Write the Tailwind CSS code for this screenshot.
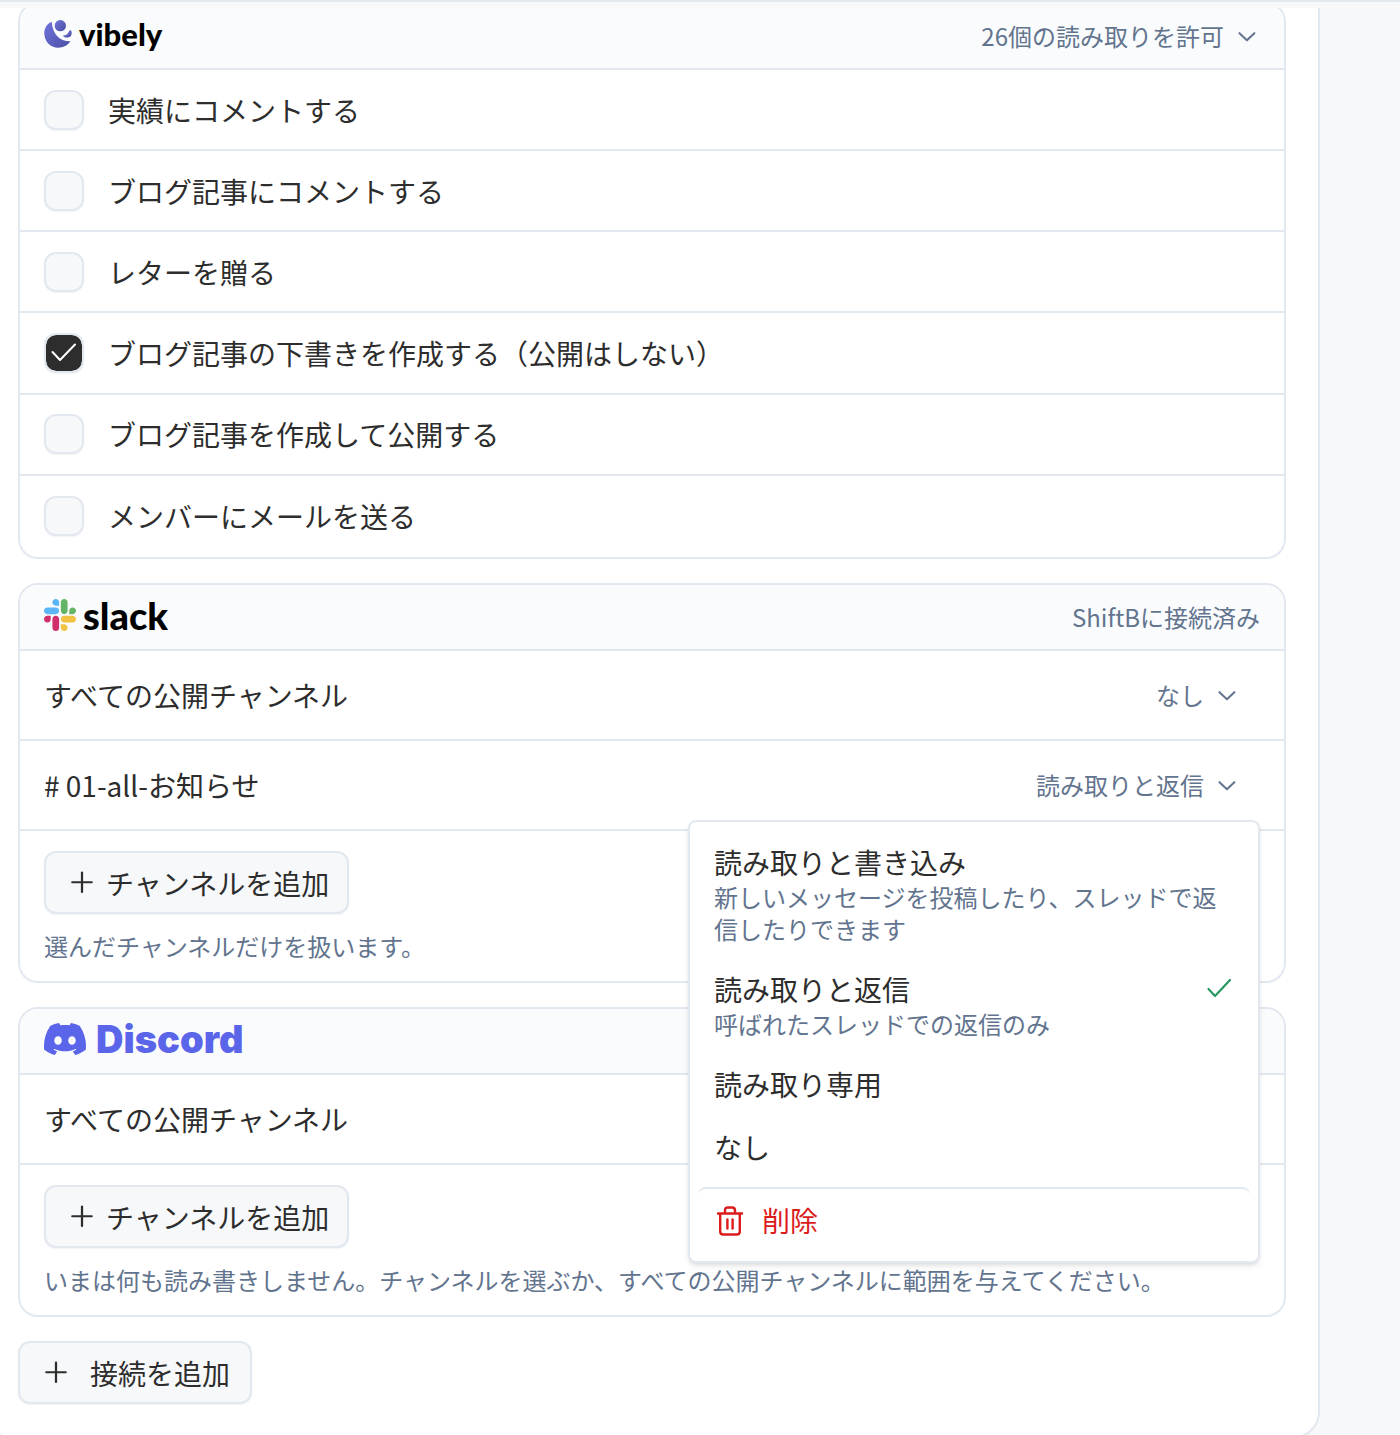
<!DOCTYPE html>
<html lang="ja">
  <head>
    <meta charset="UTF-8" />
    <meta name="viewport" content="width=device-width, initial-scale=1.0" />
    <script src="https://cdn.jsdelivr.net/npm/@tailwindcss/browser@4"></script>
    <title>接続</title>
  </head>
  <body
    class="h-screen overflow-hidden bg-[#f6f8fa] font-['Noto_Sans_CJK_JP',sans-serif] text-[28px] leading-10 text-[#2d2d2d]"
  >
    <!-- Icons -->
    <svg class="hidden">
      <symbol id="chevron" viewBox="0 0 15 15">
        <path
          d="M4 6L8 9.75L12 6"
          fill="none"
          stroke="currentColor"
          stroke-width="1.1"
          stroke-linecap="round"
          stroke-linejoin="round"
        />
      </symbol>
      <symbol id="plus" viewBox="0 0 15 15">
        <path
          d="M7.5 1.9v10.4M2.3 7.1h10.4"
          fill="none"
          stroke="currentColor"
          stroke-width="1.2"
          stroke-linecap="round"
        />
      </symbol>
    </svg>

    <!-- Top bar -->
    <header
      class="relative z-10 h-2 border-t-2 border-slate-200 bg-[#f6f8fa]"
    ></header>

    <main
      class="-mt-1.5 mr-20 -ml-4 flex flex-col items-start gap-6 rounded-b-[26px] border-2 border-t-0 border-slate-200 bg-white px-8 pb-8"
    >
      <!-- vibely -->
      <section class="w-full rounded-[20px] border-2 border-slate-200">
        <div
          class="flex h-[66px] items-center justify-between rounded-t-[18px] border-b-2 border-slate-200 bg-[#fafbfd] px-6"
        >
          <h2
            class="flex items-center gap-[7px] pb-1 font-['Lato'] text-[31px] font-black text-black"
          >
            <svg class="h-7 w-7" viewBox="0 0 84 84" fill="url(#vibely)">
              <defs>
                <linearGradient id="vibely" x1="0" y1="0" x2="1" y2="1">
                  <stop offset="0" stop-color="#6f74dc" />
                  <stop offset="1" stop-color="#4c4fa3" />
                </linearGradient>
              </defs>
              <path
                d="M23 5C6 12 0 28 1 44C4 68 22 83 42 83C58 83 71 77 79 64C62 64 49 59 40 49C30 38 25 24 23 5Z"
              />
              <path
                d="M82 33C85 43 81 50 74 52C68 54 61 52 56 47C66 47 73 42 75 34C77 30 81 30 82 33Z"
              />
              <circle cx="49" cy="17" r="17" />
            </svg>
            vibely
          </h2>
          <button
            type="button"
            class="flex items-center gap-2 text-2xl text-slate-500"
          >
            26個の読み取りを許可
            <svg class="h-7 w-7"><use href="#chevron" /></svg>
          </button>
        </div>
        <div
          class="grid min-h-[487px] auto-rows-fr divide-y-2 divide-slate-200"
        >
          <label class="flex items-center gap-6 px-6">
            <span class="grid place-items-center">
              <input
                type="checkbox"
                class="peer col-start-1 row-start-1 h-10 w-10 appearance-none rounded-xl border-2 border-slate-200 bg-[#f6f8fa] bg-clip-padding shadow-xs checked:bg-[#2d2d2d]"
              />
              <svg
                class="invisible col-start-1 row-start-1 h-7 w-7 text-white peer-checked:visible"
                viewBox="0 0 28 28"
              >
                <path
                  d="M2.5 13L10 21L25 5.5"
                  fill="none"
                  stroke="currentColor"
                  stroke-width="2"
                  stroke-linecap="round"
                  stroke-linejoin="round"
                />
              </svg>
            </span>
            実績にコメントする
          </label>
          <label class="flex items-center gap-6 px-6">
            <span class="grid place-items-center">
              <input
                type="checkbox"
                class="peer col-start-1 row-start-1 h-10 w-10 appearance-none rounded-xl border-2 border-slate-200 bg-[#f6f8fa] bg-clip-padding shadow-xs checked:bg-[#2d2d2d]"
              />
              <svg
                class="invisible col-start-1 row-start-1 h-7 w-7 text-white peer-checked:visible"
                viewBox="0 0 28 28"
              >
                <path
                  d="M2.5 13L10 21L25 5.5"
                  fill="none"
                  stroke="currentColor"
                  stroke-width="2"
                  stroke-linecap="round"
                  stroke-linejoin="round"
                />
              </svg>
            </span>
            ブログ記事にコメントする
          </label>
          <label class="flex items-center gap-6 px-6">
            <span class="grid place-items-center">
              <input
                type="checkbox"
                class="peer col-start-1 row-start-1 h-10 w-10 appearance-none rounded-xl border-2 border-slate-200 bg-[#f6f8fa] bg-clip-padding shadow-xs checked:bg-[#2d2d2d]"
              />
              <svg
                class="invisible col-start-1 row-start-1 h-7 w-7 text-white peer-checked:visible"
                viewBox="0 0 28 28"
              >
                <path
                  d="M2.5 13L10 21L25 5.5"
                  fill="none"
                  stroke="currentColor"
                  stroke-width="2"
                  stroke-linecap="round"
                  stroke-linejoin="round"
                />
              </svg>
            </span>
            レターを贈る
          </label>
          <label class="flex items-center gap-6 px-6">
            <span class="grid place-items-center">
              <input
                type="checkbox"
                checked
                class="peer col-start-1 row-start-1 h-10 w-10 appearance-none rounded-xl border-2 border-slate-200 bg-[#f6f8fa] bg-clip-padding shadow-xs checked:bg-[#2d2d2d]"
              />
              <svg
                class="invisible col-start-1 row-start-1 h-7 w-7 text-white peer-checked:visible"
                viewBox="0 0 28 28"
              >
                <path
                  d="M2.5 13L10 21L25 5.5"
                  fill="none"
                  stroke="currentColor"
                  stroke-width="2"
                  stroke-linecap="round"
                  stroke-linejoin="round"
                />
              </svg>
            </span>
            ブログ記事の下書きを作成する（公開はしない）
          </label>
          <label class="flex items-center gap-6 px-6">
            <span class="grid place-items-center">
              <input
                type="checkbox"
                class="peer col-start-1 row-start-1 h-10 w-10 appearance-none rounded-xl border-2 border-slate-200 bg-[#f6f8fa] bg-clip-padding shadow-xs checked:bg-[#2d2d2d]"
              />
              <svg
                class="invisible col-start-1 row-start-1 h-7 w-7 text-white peer-checked:visible"
                viewBox="0 0 28 28"
              >
                <path
                  d="M2.5 13L10 21L25 5.5"
                  fill="none"
                  stroke="currentColor"
                  stroke-width="2"
                  stroke-linecap="round"
                  stroke-linejoin="round"
                />
              </svg>
            </span>
            ブログ記事を作成して公開する
          </label>
          <label class="flex items-center gap-6 px-6">
            <span class="grid place-items-center">
              <input
                type="checkbox"
                class="peer col-start-1 row-start-1 h-10 w-10 appearance-none rounded-xl border-2 border-slate-200 bg-[#f6f8fa] bg-clip-padding shadow-xs checked:bg-[#2d2d2d]"
              />
              <svg
                class="invisible col-start-1 row-start-1 h-7 w-7 text-white peer-checked:visible"
                viewBox="0 0 28 28"
              >
                <path
                  d="M2.5 13L10 21L25 5.5"
                  fill="none"
                  stroke="currentColor"
                  stroke-width="2"
                  stroke-linecap="round"
                  stroke-linejoin="round"
                />
              </svg>
            </span>
            メンバーにメールを送る
          </label>
        </div>
      </section>

      <!-- Slack -->
      <section class="w-full rounded-[20px] border-2 border-slate-200">
        <div
          class="flex h-[66px] items-center justify-between rounded-t-[18px] border-b-2 border-slate-200 bg-[#fafbfd] px-6"
        >
          <h2
            class="flex items-center gap-[7px] pb-1 font-['Lato'] text-[38px] font-black text-black"
          >
            <svg class="h-8 w-8" viewBox="0 0 122.8 122.8">
              <path
                fill="#d02f6b"
                d="M25.8 77.6c0 7.1-5.8 12.9-12.9 12.9S0 84.7 0 77.6s5.8-12.9 12.9-12.9h12.9v12.9zm6.5 0c0-7.1 5.8-12.9 12.9-12.9s12.9 5.8 12.9 12.9v32.3c0 7.1-5.8 12.9-12.9 12.9s-12.9-5.8-12.9-12.9V77.6z"
              />
              <path
                fill="#5ab6f7"
                d="M45.2 25.8c-7.1 0-12.9-5.8-12.9-12.9S38.1 0 45.2 0s12.9 5.8 12.9 12.9v12.9H45.2zm0 6.5c7.1 0 12.9 5.8 12.9 12.9s-5.8 12.9-12.9 12.9H12.9C5.8 58.1 0 52.3 0 45.2s5.8-12.9 12.9-12.9h32.3z"
              />
              <path
                fill="#63b465"
                d="M97 45.2c0-7.1 5.8-12.9 12.9-12.9s12.9 5.8 12.9 12.9-5.8 12.9-12.9 12.9H97V45.2zm-6.5 0c0 7.1-5.8 12.9-12.9 12.9s-12.9-5.8-12.9-12.9V12.9C64.7 5.8 70.5 0 77.6 0s12.9 5.8 12.9 12.9v32.3z"
              />
              <path
                fill="#f2c244"
                d="M77.6 97c7.1 0 12.9 5.8 12.9 12.9s-5.8 12.9-12.9 12.9-12.9-5.8-12.9-12.9V97h12.9zm0-6.5c-7.1 0-12.9-5.8-12.9-12.9s5.8-12.9 12.9-12.9h32.3c7.1 0 12.9 5.8 12.9 12.9s-5.8 12.9-12.9 12.9H77.6z"
              />
            </svg>
            slack
          </h2>
          <span class="text-2xl text-slate-500">ShiftBに接続済み</span>
        </div>
        <ul>
          <li
            class="flex h-[90px] items-center justify-between border-b-2 border-slate-200 px-6"
          >
            すべての公開チャンネル
            <button
              type="button"
              class="flex items-center gap-2 px-5 text-2xl text-slate-500"
            >
              なし
              <svg class="h-7 w-7"><use href="#chevron" /></svg>
            </button>
          </li>
          <li
            class="relative flex h-[90px] items-center justify-between border-b-2 border-slate-200 px-6"
          >
            # 01-all-お知らせ
            <button
              type="button"
              aria-haspopup="menu"
              aria-expanded="true"
              class="flex items-center gap-2 px-5 text-2xl text-slate-500"
            >
              読み取りと返信
              <svg class="h-7 w-7"><use href="#chevron" /></svg>
            </button>

            <!-- Permission menu -->
            <div
              role="menu"
              class="absolute top-[79px] right-6 z-20 flex w-[572px] flex-col rounded-lg border-2 border-slate-200 bg-white px-2 py-[9px] shadow-md"
            >
              <button
                type="button"
                role="menuitem"
                class="px-4 py-[13px] text-left leading-[37px]"
              >
                読み取りと書き込み
                <span class="block text-2xl leading-8 text-slate-500"
                  >新しいメッセージを投稿したり、スレッドで返信したりできます</span
                >
              </button>
              <button
                type="button"
                role="menuitem"
                class="px-4 py-[13px] text-left leading-[37px]"
              >
                <span class="flex items-center justify-between">
                  読み取りと返信
                  <svg class="h-7 w-7 text-[#299764]" viewBox="0 0 28 28">
                    <path
                      d="M2.5 13L9 20L24 4"
                      fill="none"
                      stroke="currentColor"
                      stroke-width="2.2"
                      stroke-linecap="round"
                      stroke-linejoin="round"
                    />
                  </svg>
                </span>
                <span class="block text-2xl leading-8 text-slate-500"
                  >呼ばれたスレッドでの返信のみ</span
                >
              </button>
              <button
                type="button"
                role="menuitem"
                class="px-4 py-[13px] text-left leading-[37px]"
              >
                読み取り専用
              </button>
              <button
                type="button"
                role="menuitem"
                class="px-4 py-[13px] text-left leading-[37px]"
              >
                なし
              </button>
              <button
                type="button"
                role="menuitem"
                class="mt-2 flex items-center gap-4 rounded-lg border-t-2 border-slate-200 px-4 py-[13px] leading-[37px] text-[#dc1c1c]"
              >
                <svg
                  class="h-8 w-8"
                  viewBox="0 0 32 32"
                  fill="none"
                  stroke="currentColor"
                  stroke-width="2.4"
                  stroke-linecap="round"
                  stroke-linejoin="round"
                >
                  <path
                    d="M4 8.5H28M6.2 8.5V26.5Q6.2 29.5 9.2 29.5H22.8Q25.8 29.5 25.8 26.5V8.5M11 8V5.5Q11 2.5 14 2.5H18Q21 2.5 21 5.5V8"
                  />
                  <path d="M13.4 14.5V23.5M18.6 14.5V23.5" />
                </svg>
                削除
              </button>
            </div>
          </li>
        </ul>
        <div class="px-6 pt-5 pb-[19px]">
          <button
            type="button"
            class="flex h-[63px] items-center gap-2.5 rounded-xl border-2 border-slate-200 bg-[#f6f8fa] pr-[18px] pl-[22px] shadow-xs"
          >
            <svg class="h-7 w-7"><use href="#plus" /></svg>
            チャンネルを追加
          </button>
          <p class="mt-4 text-2xl leading-8 text-slate-500">
            選んだチャンネルだけを扱います。
          </p>
        </div>
      </section>

      <!-- Discord -->
      <section class="w-full rounded-[20px] border-2 border-slate-200">
        <div
          class="flex h-[66px] items-center justify-between rounded-t-[18px] border-b-2 border-slate-200 bg-[#fafbfd] px-6"
        >
          <h2
            class="flex items-center gap-[10px] pb-1 font-['Inter'] text-[38px] font-black text-[#5b65ea]"
          >
            <svg class="h-8 w-[42px]" viewBox="0 2.9 24 18.2">
              <path
                fill="currentColor"
                d="M20.317 4.3698a19.7913 19.7913 0 0 0-4.8851-1.5152.0741.0741 0 0 0-.0785.0371c-.211.3753-.4447.8648-.6083 1.2495-1.8447-.2762-3.68-.2762-5.4868 0-.1636-.3933-.4058-.8742-.6177-1.2495a.077.077 0 0 0-.0785-.037 19.7363 19.7363 0 0 0-4.8852 1.515.0699.0699 0 0 0-.0321.0277C.5334 9.0458-.319 13.5799.0992 18.0578a.0824.0824 0 0 0 .0312.0561c2.0528 1.5076 4.0413 2.4228 5.9929 3.0294a.0777.0777 0 0 0 .0842-.0276c.4616-.6304.8731-1.2952 1.226-1.9942a.076.076 0 0 0-.0416-.1057c-.6528-.2476-1.2743-.5495-1.8722-.8923a.077.077 0 0 1-.0076-.1277c.1258-.0943.2517-.1923.3718-.2914a.0743.0743 0 0 1 .0776-.0105c3.9278 1.7933 8.18 1.7933 12.0614 0a.0739.0739 0 0 1 .0785.0095c.1202.099.246.1981.3728.2924a.077.077 0 0 1-.0066.1276 12.2986 12.2986 0 0 1-1.873.8914.0766.0766 0 0 0-.0407.1067c.3604.698.7719 1.3628 1.225 1.9932a.076.076 0 0 0 .0842.0286c1.961-.6067 3.9495-1.5219 6.0023-3.0294a.077.077 0 0 0 .0313-.0552c.5004-5.177-.8382-9.6739-3.5485-13.6604a.061.061 0 0 0-.0312-.0286zM8.02 15.3312c-1.1825 0-2.1569-1.0857-2.1569-2.419 0-1.3332.9555-2.4189 2.157-2.4189 1.2108 0 2.1757 1.0952 2.1568 2.419 0 1.3332-.9555 2.4189-2.1569 2.4189zm7.9748 0c-1.1825 0-2.1569-1.0857-2.1569-2.419 0-1.3332.9554-2.4189 2.1569-2.4189 1.2108 0 2.1757 1.0952 2.1568 2.419 0 1.3332-.946 2.4189-2.1568 2.4189Z"
              />
            </svg>
            Discord
          </h2>
        </div>
        <ul>
          <li
            class="flex h-[90px] items-center justify-between border-b-2 border-slate-200 px-6"
          >
            すべての公開チャンネル
          </li>
        </ul>
        <div class="px-6 pt-5 pb-[19px]">
          <button
            type="button"
            class="flex h-[63px] items-center gap-2.5 rounded-xl border-2 border-slate-200 bg-[#f6f8fa] pr-[18px] pl-[22px] shadow-xs"
          >
            <svg class="h-7 w-7"><use href="#plus" /></svg>
            チャンネルを追加
          </button>
          <p class="mt-4 text-2xl leading-8 text-slate-500">
            いまは何も読み書きしません。チャンネルを選ぶか、すべての公開チャンネルに範囲を与えてください。
          </p>
        </div>
      </section>

      <button
        type="button"
        class="flex h-[63px] items-center gap-5 rounded-xl border-2 border-slate-200 bg-[#f6f8fa] pr-5 pl-[22px] shadow-xs"
      >
        <svg class="h-7 w-7"><use href="#plus" /></svg>
        接続を追加
      </button>
    </main>
  </body>
</html>
